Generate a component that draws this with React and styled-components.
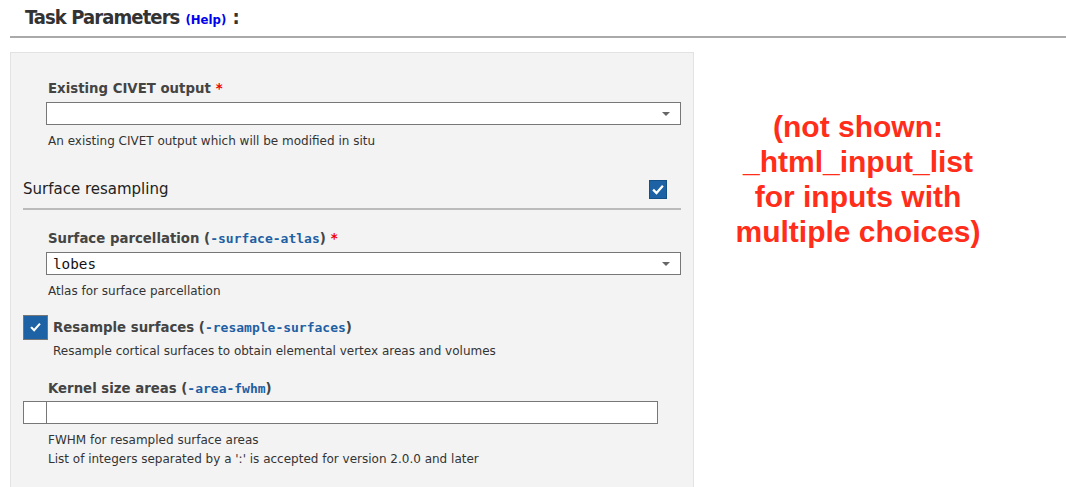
import React from "react";
import styled, { createGlobalStyle } from "styled-components";

const Global = createGlobalStyle`
  html, body { margin: 0; padding: 0; background: #fff; }
  body { font-family: "DejaVu Sans", Verdana, sans-serif; color: #333; }
`;

const Page = styled.div`
  padding-left: 10px;
  width: 1056px;
`;

const Header = styled.div`
  height: 38px;
  border-bottom: 2px solid #aaa;
  display: flex;
  align-items: center;
  padding-left: 15px;
  box-sizing: border-box;
`;

const Title = styled.h2`
  margin: 0;
  font-size: 20px;
  font-weight: bold;
  color: #333;
  letter-spacing: -0.9px;
  font-family: "DejaVu Sans Condensed", "DejaVu Sans", sans-serif;
  position: relative;
  top: -1px;
`;

const HelpLink = styled.a`
  font-size: 13px;
  letter-spacing: 0;
  color: #0000ee;
  text-decoration: none;
  margin-left: 6px;
  margin-right: 1px;
`;

const Main = styled.div`
  display: flex;
  margin-top: 14px;
`;

const Panel = styled.div`
  width: 684px;
  height: 440px;
  background: #f3f3f3;
  border: 1px solid #e2e2e2;
  border-bottom: none;
  padding: 0 12px;
  box-sizing: border-box;
`;

const Field = styled.div`
  padding-left: 23px;
  margin-top: ${(p) => p.$top || 0}px;
`;

const Label = styled.div`
  font-size: 13.3px;
  font-weight: bold;
  color: #444;
  padding-left: 2px;
  height: 16px;
  line-height: 16px;
  margin-bottom: ${(p) => p.$gap || 5}px;
`;

const Req = styled.span`
  color: #e00;
  margin-left: 5px;
`;

const Code = styled.code`
  font-family: "DejaVu Sans Mono", monospace;
  font-size: 13px;
  font-weight: bold;
  color: #1f5fa3;
`;

const Select = styled.div`
  height: 23px;
  width: 635px;
  box-sizing: border-box;
  background: #fff;
  border: 1px solid #777;
  display: flex;
  align-items: center;
  justify-content: space-between;
  padding: 0 10px 0 6px;
  font-family: "DejaVu Sans Mono", monospace;
  font-size: 14.3px;
  color: #111;
`;

const Arrow = styled.span`
  width: 0;
  height: 0;
  border-left: 4px solid transparent;
  border-right: 4px solid transparent;
  border-top: 4px solid #666;
`;

const Hint = styled.div`
  font-size: 12px;
  color: #333;
  padding-left: 2px;
  line-height: 19px;
  margin-top: ${(p) => p.$top || 6}px;
`;

const Section = styled.div`
  display: flex;
  align-items: flex-end;
  justify-content: space-between;
  height: 41px;
  padding-bottom: 9px;
  border-bottom: 2px solid #bbb;
  box-sizing: border-box;
  margin-top: ${(p) => p.$top || 0}px;
`;

const SectionTitle = styled.div`
  font-size: 15px;
  line-height: 20px;
  color: #222;
`;

const SmallBox = styled.div`
  width: 18px;
  height: 19px;
  box-sizing: border-box;
  background: #1d62a5;
  border: 1px solid #145088;
  display: flex;
  align-items: center;
  justify-content: center;
  margin-right: 14px;
`;

const BigBox = styled.div`
  width: 25px;
  height: 25px;
  box-sizing: border-box;
  background: #1d62a5;
  border: 1px solid #777;
  display: flex;
  align-items: center;
  justify-content: center;
  flex: none;
`;

const CheckRow = styled.div`
  display: flex;
  align-items: center;
  gap: 5px;
  margin-top: ${(p) => p.$top || 0}px;
`;

const CheckLabel = styled.div`
  font-size: 13.3px;
  font-weight: bold;
  color: #444;
`;

const SubHint = styled.div`
  font-size: 12px;
  line-height: 19px;
  color: #333;
  padding-left: 30px;
  margin-top: 2px;
`;

const InputRow = styled.div`
  display: flex;
  width: 635px;
  height: 23px;
  box-sizing: border-box;
  border: 1px solid #777;
  background: #fff;
`;

const Prefix = styled.div`
  width: 22px;
  border-right: 1px solid #777;
`;

const Annotation = styled.div`
  width: 328px;
  text-align: center;
  font-family: "Liberation Sans", Arial, sans-serif;
  font-weight: bold;
  font-size: 30px;
  line-height: 35px;
  color: #ff2d1a;
  padding-top: 57px;
`;

const Check = ({ size }) => (
  <svg width={size} height={size} viewBox="0 0 16 16">
    <path d="M2.5 8.5 L6 12 L13.5 3.5" stroke="#fff" strokeWidth="3" fill="none" strokeLinecap="square" />
  </svg>
);

export default function App() {
  return (
    <>
      <Global />
      <Page>
        <Header>
          <Title>
            Task Parameters<HelpLink href="#">(Help)</HelpLink> :
          </Title>
        </Header>
        <Main>
          <Panel>
            <Field $top={28}>
              <Label>
                Existing CIVET output<Req>*</Req>
              </Label>
              <Select>
                <span />
                <Arrow />
              </Select>
              <Hint $top={7}>An existing CIVET output which will be modified in situ</Hint>
            </Field>
            <Section $top={18}>
              <SectionTitle>Surface resampling</SectionTitle>
              <SmallBox>
                <Check size={12} />
              </SmallBox>
            </Section>
            <Field $top={21}>
              <Label $gap={5}>
                Surface parcellation (<Code>-surface-atlas</Code>)<Req>*</Req>
              </Label>
              <Select>
                <span>lobes</span>
                <Arrow />
              </Select>
              <Hint $top={7}>Atlas for surface parcellation</Hint>
            </Field>
            <CheckRow $top={14}>
              <BigBox>
                <Check size={11} />
              </BigBox>
              <CheckLabel>
                Resample surfaces (<Code>-resample-surfaces</Code>)
              </CheckLabel>
            </CheckRow>
            <SubHint>Resample cortical surfaces to obtain elemental vertex areas and volumes</SubHint>
            <Field $top={20}>
              <Label $gap={4}>
                Kernel size areas (<Code>-area-fwhm</Code>)
              </Label>
            </Field>
            <InputRow>
              <Prefix />
            </InputRow>
            <Field>
              <Hint $top={7}>
                FWHM for resampled surface areas
                <br />
                List of integers separated by a ':' is accepted for version 2.0.0 and later
              </Hint>
            </Field>
          </Panel>
          <Annotation>
            (not shown:
            <br />
            _html_input_list
            <br />
            for inputs with
            <br />
            multiple choices)
          </Annotation>
        </Main>
      </Page>
    </>
  );
}
